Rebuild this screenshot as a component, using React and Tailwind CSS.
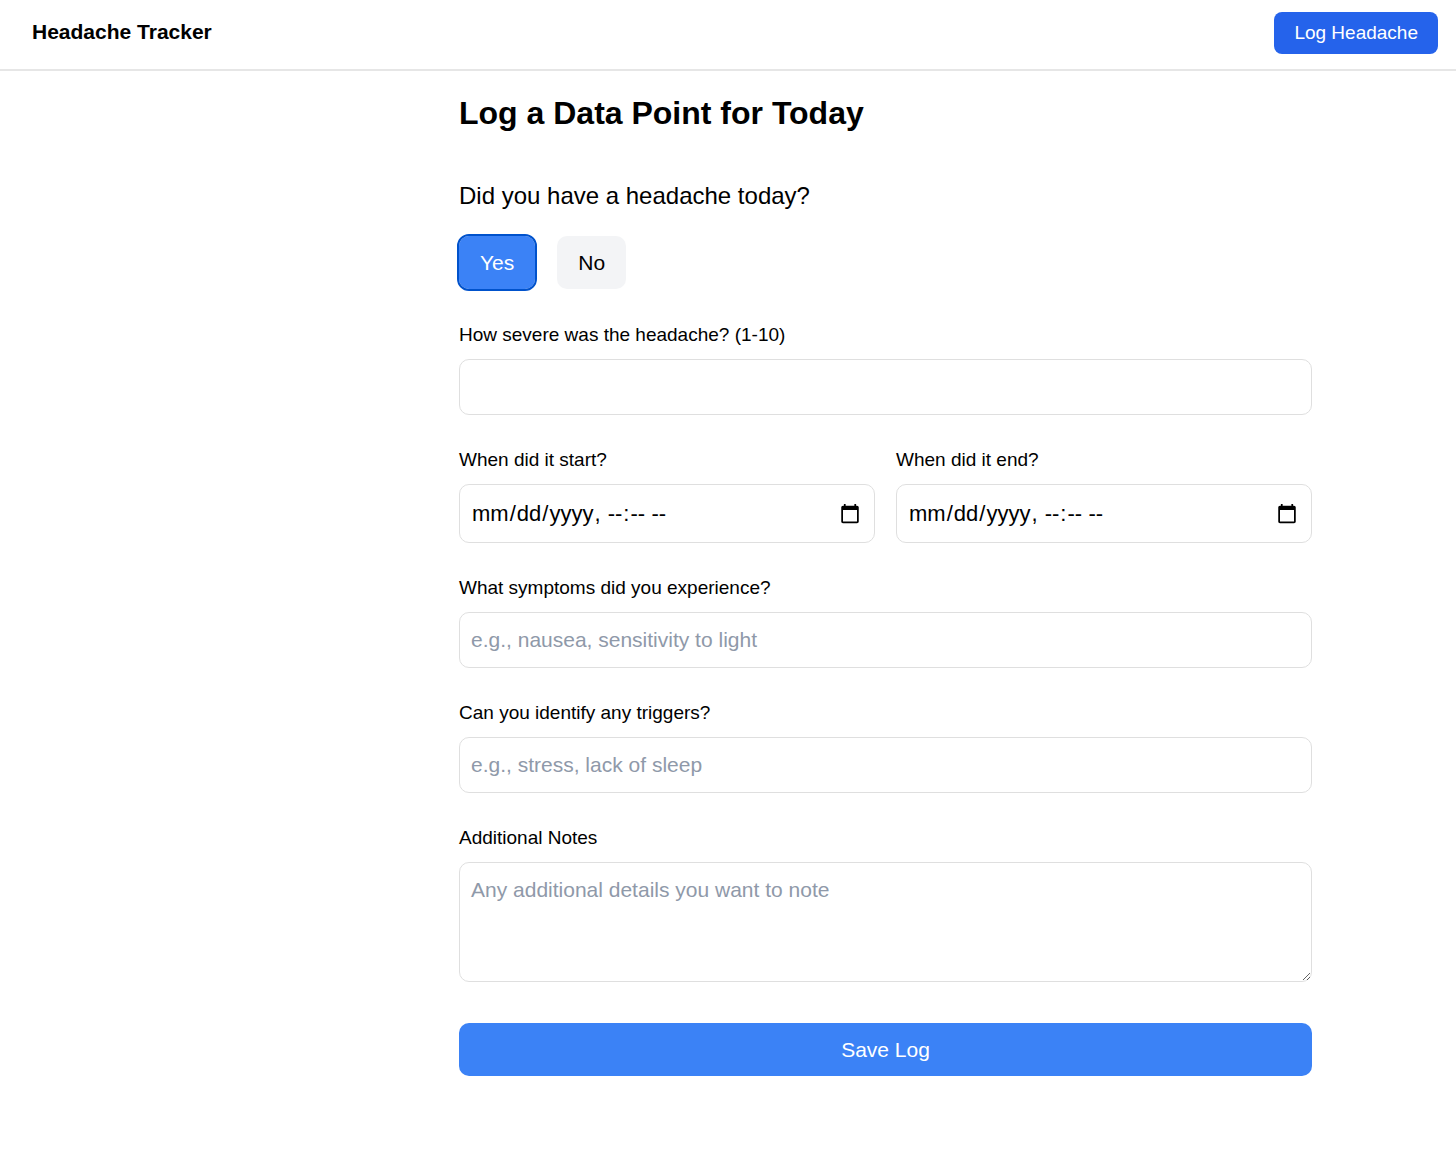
import { useState } from "react";

const field =
  "block w-full rounded-[10px] border border-[#dfdfdf] bg-white px-[11px] leading-8 text-black placeholder:text-[#8f99a9]";

function Field({ id, label, children }) {
  return (
    <div>
      <label htmlFor={id} className="mb-3 block text-[19px] leading-6">
        {label}
      </label>
      {children}
    </div>
  );
}

function DateField({ id, label }) {
  return (
    <Field id={id} label={label}>
      <input id={id} type="datetime-local" className={`${field} h-[59px] text-[22px]`} />
    </Field>
  );
}

export default function App() {
  const [had, setHad] = useState(true);
  const on = "bg-[#3b82f6] text-white outline-2 outline-[#0052cc]";
  const off = "bg-gray-100 text-black";
  return (
    <div className="min-h-screen bg-white font-['Liberation_Sans',Arial,sans-serif] text-black">
      <header className="flex items-start justify-between border-b-2 border-[#e6e6e6] pt-3 pr-[18px] pb-[15px] pl-8">
        <span className="pt-1 text-[21px] leading-8 font-bold">Headache Tracker</span>
        <button type="button" className="h-[42px] rounded-lg bg-[#2563eb] px-5 text-[19px] text-white">
          Log Headache
        </button>
      </header>
      <main className="mr-36 ml-[459px] pt-5">
        <h1 className="text-[32px] leading-[44px] font-bold">Log a Data Point for Today</h1>
        <form className="mt-[45px]" onSubmit={(e) => e.preventDefault()}>
          <h2 className="text-[24px] leading-8">Did you have a headache today?</h2>
          <div className="mt-6 mb-[34px] flex gap-[22px]">
            <button type="button" onClick={() => setHad(true)} className={`h-[53px] rounded-[10px] px-[21px] text-[21px] ${had ? on : off}`}>
              Yes
            </button>
            <button type="button" onClick={() => setHad(false)} className={`h-[53px] rounded-[10px] px-[21px] text-[21px] ${had ? off : on}`}>
              No
            </button>
          </div>
          <div className="flex flex-col gap-[33px]">
            <Field id="severity" label="How severe was the headache? (1-10)">
              <input id="severity" type="number" min="1" max="10" className={`${field} h-14 text-[21px]`} />
            </Field>
            <div className="grid grid-cols-2 gap-[21px]">
              <DateField id="start" label="When did it start?" />
              <DateField id="end" label="When did it end?" />
            </div>
            <Field id="symptoms" label="What symptoms did you experience?">
              <input id="symptoms" type="text" placeholder="e.g., nausea, sensitivity to light" className={`${field} h-14 text-[21px]`} />
            </Field>
            <Field id="triggers" label="Can you identify any triggers?">
              <input id="triggers" type="text" placeholder="e.g., stress, lack of sleep" className={`${field} h-14 text-[21px]`} />
            </Field>
            <Field id="notes" label="Additional Notes">
              <textarea id="notes" placeholder="Any additional details you want to note" className={`${field} h-[120px] resize-y py-[11px] text-[21px]`} />
            </Field>
          </div>
          <button type="submit" className="mt-[41px] h-[53px] w-full rounded-[10px] bg-[#3b82f6] text-[21px] text-white">
            Save Log
          </button>
        </form>
      </main>
    </div>
  );
}
